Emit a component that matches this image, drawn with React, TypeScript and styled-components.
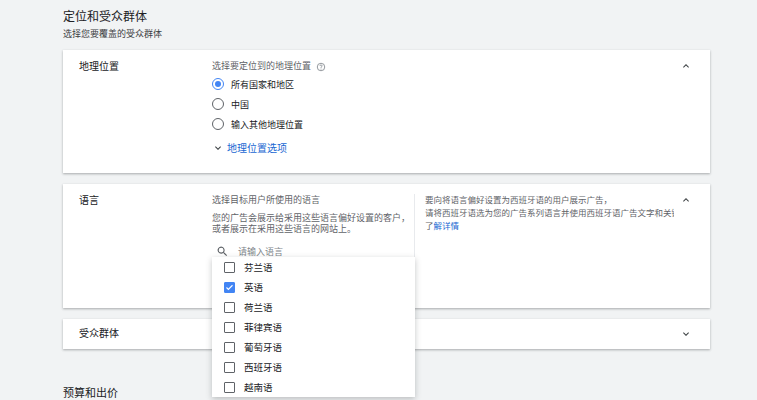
import React from 'react';
import styled, { createGlobalStyle } from 'styled-components';

const Global = createGlobalStyle`
  *, *::before, *::after { box-sizing: border-box; }
  body {
    margin: 0;
    background: #f1f3f4;
    font-family: Roboto, "Noto Sans CJK SC", sans-serif;
    color: #202124;
  }
`;

const Page = styled.div`
  padding: 8px 47px 0 63px;
  height: 400px;
  overflow: hidden;
`;

const Title = styled.div`
  font-size: 12px;
  line-height: 18px;
`;

const Subtitle = styled.div`
  font-size: 9px;
  line-height: 16px;
  color: #3c4043;
  margin-bottom: 8px;
`;

const Card = styled.div<{ h: number }>`
  background: #fff;
  height: ${({ h }) => h}px;
  box-shadow: 0 1px 2px rgba(60, 64, 67, 0.3), 0 1px 3px rgba(60, 64, 67, 0.12);
  display: flex;
  margin-bottom: 11px;
  position: relative;
`;

const Label = styled.div<{ top?: number }>`
  width: 149px;
  padding: ${({ top }) => top ?? 10}px 0 0 16px;
  font-size: 10px;
  line-height: 14px;
  flex-shrink: 0;
`;

const Body = styled.div`
  flex: 1;
  min-width: 0;
  display: flex;
  padding-top: 10px;
`;

const Hint = styled.div`
  font-size: 9px;
  color: #5f6368;
  line-height: 13px;
  display: flex;
  align-items: center;
  gap: 5px;
`;

const Radio = styled.div`
  display: flex;
  align-items: center;
  gap: 7px;
  height: 20px;
  font-size: 9px;
`;

const RadioDot = styled.span<{ on?: boolean }>`
  width: 12px;
  height: 12px;
  border-radius: 50%;
  border: 1.5px solid ${({ on }) => (on ? '#4285f4' : '#5f6368')};
  position: relative;
  &::after {
    content: '';
    display: ${({ on }) => (on ? 'block' : 'none')};
    position: absolute;
    inset: 2px;
    border-radius: 50%;
    background: #4285f4;
  }
`;

const LinkRow = styled.div`
  margin-top: 6px;
  font-size: 10px;
  color: #1967d2;
  display: flex;
  align-items: center;
  gap: 3px;
`;

const Chevron = styled.div<{ top?: number }>`
  width: 36px;
  padding: ${({ top }) => top ?? 10}px 12px 0 0;
  display: flex;
  justify-content: center;
  flex-shrink: 0;
`;

const Lang = styled.div`
  width: 203px;
  flex-shrink: 0;
  border-right: 1px solid #e8eaed;
  height: 73px;
`;

const Small = styled.div`
  font-size: 9px;
  line-height: 11px;
  color: #5f6368;
  margin-top: 6px;
`;

const Search = styled.div`
  margin-top: 6px;
  height: 22px;
  border-bottom: 1px solid #5f6368;
  display: flex;
  align-items: center;
  gap: 9px;
  padding-left: 4px;
  font-size: 9px;
  color: #80868b;
`;

const Side = styled.div`
  padding-left: 10px;
  font-size: 8.5px;
  line-height: 13px;
  color: #5f6368;
  flex: 1;
  min-width: 0;
  white-space: nowrap;
  overflow: hidden;
`;

const A = styled.span`
  color: #1967d2;
`;

const Menu = styled.div`
  position: absolute;
  left: 149px;
  top: 73px;
  width: 203px;
  background: #fff;
  box-shadow: 0 2px 6px rgba(60, 64, 67, 0.3);
  z-index: 5;
`;

const Item = styled.div`
  height: 20px;
  display: flex;
  align-items: center;
  gap: 9px;
  padding-left: 12px;
  font-size: 9.5px;
`;

const Box = styled.span<{ on?: boolean }>`
  width: 11px;
  height: 11px;
  border: 1.5px solid ${({ on }) => (on ? '#4285f4' : '#5f6368')};
  background: ${({ on }) => (on ? '#4285f4' : '#fff')};
  border-radius: 1px;
  display: flex;
  align-items: center;
  justify-content: center;
`;

const Section = styled.div`
  font-size: 11px;
  margin-top: 35px;
`;

const Up = ({ down }: { down?: boolean }) => (
  <svg width="12" height="12" viewBox="0 0 24 24">
    <path d={down ? 'M7.4 8.6 12 13.2l4.6-4.6L18 10l-6 6-6-6z' : 'M7.4 15.4 12 10.8l4.6 4.6L18 14l-6-6-6 6z'} fill="#3c4043" />
  </svg>
);

const langs = ['芬兰语', '英语', '荷兰语', '菲律宾语', '葡萄牙语', '西班牙语', '越南语'];

export default function App() {
  return (
    <Page>
      <Global />
      <Title>定位和受众群体</Title>
      <Subtitle>选择您要覆盖的受众群体</Subtitle>
      <Card h={123}>
        <Label>地理位置</Label>
        <Body>
          <div>
            <Hint>
              选择要定位到的地理位置
              <svg width="10" height="10" viewBox="0 0 24 24">
                <circle cx="12" cy="12" r="9" fill="none" stroke="#80868b" strokeWidth="2" />
                <path d="M9.5 9.5a2.5 2.5 0 1 1 3.5 2.3c-.7.3-1 .8-1 1.5v.7" fill="none" stroke="#80868b" strokeWidth="2" />
                <circle cx="12" cy="17" r="1.2" fill="#80868b" />
              </svg>
            </Hint>
            <div style={{ marginTop: 1 }}>
              <Radio><RadioDot on />所有国家和地区</Radio>
              <Radio><RadioDot />中国</Radio>
              <Radio><RadioDot />输入其他地理位置</Radio>
            </div>
            <LinkRow>
              <Up down />
              地理位置选项
            </LinkRow>
          </div>
        </Body>
        <Chevron><Up /></Chevron>
      </Card>
      <Card h={124}>
        <Label>语言</Label>
        <Body>
          <Lang>
            <Hint>选择目标用户所使用的语言</Hint>
            <Small>您的广告会展示给采用这些语言偏好设置的客户，<br />或者展示在采用这些语言的网站上。</Small>
            <Search>
              <svg width="13" height="13" viewBox="0 0 24 24">
                <path d="M15.5 14h-.8l-.3-.3A6.5 6.5 0 1 0 9.5 16a6.5 6.5 0 0 0 4.2-1.6l.3.3v.8l5 5 1.5-1.5-5-5zm-6 0a4.5 4.5 0 1 1 0-9 4.5 4.5 0 0 1 0 9z" fill="#5f6368" />
              </svg>
              请输入语言
            </Search>
          </Lang>
          <Side>
            要向将语言偏好设置为西班牙语的用户展示广告，<br />
            请将西班牙语选为您的广告系列语言并使用西班牙语广告文字和关键字<br />
            了<A>解详情</A>
          </Side>
        </Body>
        <Chevron><Up /></Chevron>
        <Menu>
          {langs.map(l => (
            <Item key={l}>
              <Box on={l === '英语'}>
                {l === '英语' && (
                  <svg width="9" height="9" viewBox="0 0 24 24">
                    <path d="M4 12l5 5L20 6" fill="none" stroke="#fff" strokeWidth="3" />
                  </svg>
                )}
              </Box>
              {l}
            </Item>
          ))}
        </Menu>
      </Card>
      <Card h={30}>
        <Label top={8}>受众群体</Label>
        <Body />
        <Chevron top={9}><Up down /></Chevron>
      </Card>
      <Section>预算和出价</Section>
    </Page>
  );
}
